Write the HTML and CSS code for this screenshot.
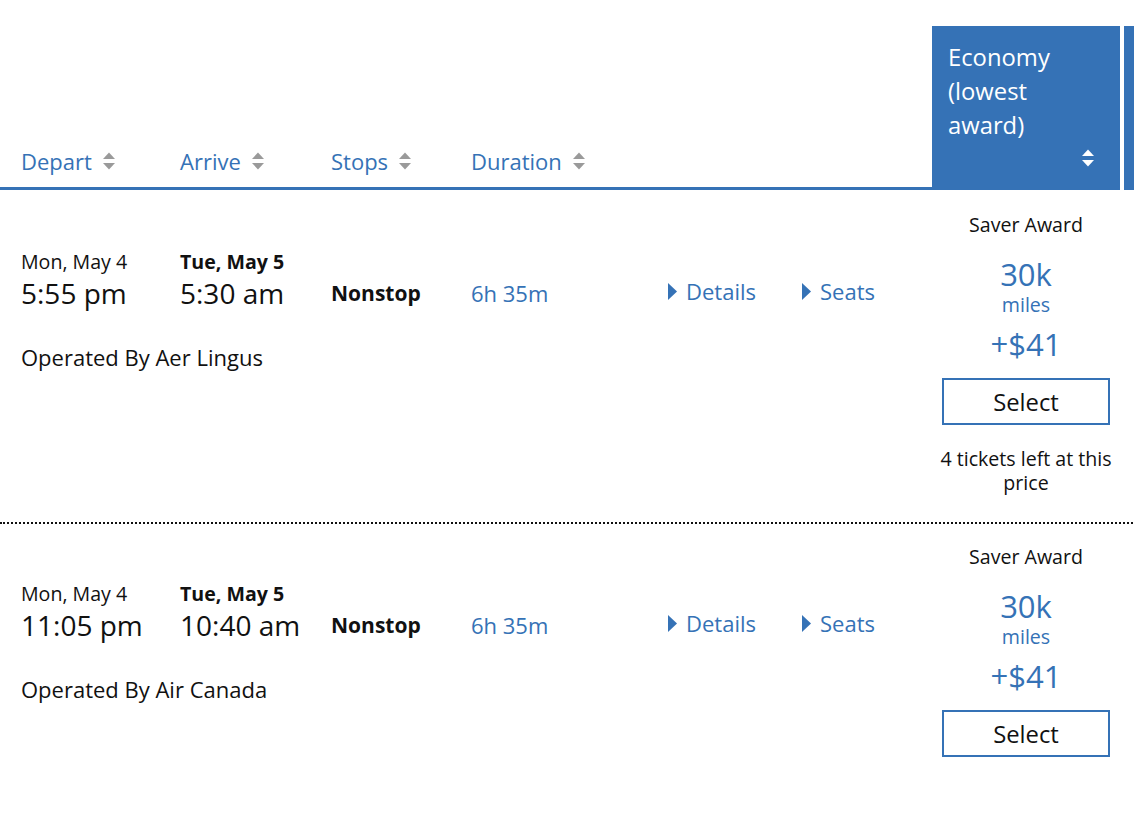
FILE: index.html
```html
<!DOCTYPE html>
<html lang="en">
<head>
<meta charset="utf-8">
<title>Flight results</title>
<link rel="stylesheet" href="styles.css">
</head>
<body>
<div class="results">
  <div class="thead">
    <div class="hcols">
      <div class="hcell"><span>Depart</span><svg class="sort" viewBox="0 0 12 18"><polygon points="0,7 6,0.5 12,7"/><polygon points="0,11 12,11 6,17.5"/></svg></div>
      <div class="hcell"><span>Arrive</span><svg class="sort" viewBox="0 0 12 18"><polygon points="0,7 6,0.5 12,7"/><polygon points="0,11 12,11 6,17.5"/></svg></div>
      <div class="hcell"><span>Stops</span><svg class="sort" viewBox="0 0 12 18"><polygon points="0,7 6,0.5 12,7"/><polygon points="0,11 12,11 6,17.5"/></svg></div>
      <div class="hcell"><span>Duration</span><svg class="sort" viewBox="0 0 12 18"><polygon points="0,7 6,0.5 12,7"/><polygon points="0,11 12,11 6,17.5"/></svg></div>
      <div class="hcell"></div>
      <div class="hcell"></div>
    </div>
    <div class="hecon">
      <div class="hecon-title">Economy<br>(lowest<br>award)</div>
      <svg class="sort sort-white" viewBox="0 0 12 18"><polygon points="0,7 6,0.5 12,7"/><polygon points="0,11 12,11 6,17.5"/></svg>
    </div>
    <div class="hnext"></div>
  </div>

  <div class="row">
    <div class="flight">
      <div class="fgrid">
        <div class="cell"><div class="date">Mon, May 4</div><div class="time">5:55 pm</div></div>
        <div class="cell"><div class="date bold">Tue, May 5</div><div class="time">5:30 am</div></div>
        <div class="cell stops">Nonstop</div>
        <div class="cell dur">6h 35m</div>
        <div class="cell link"><svg class="tri" viewBox="0 0 9 17"><polygon points="0,0 9,8.5 0,17"/></svg><span>Details</span></div>
        <div class="cell link"><svg class="tri" viewBox="0 0 9 17"><polygon points="0,0 9,8.5 0,17"/></svg><span>Seats</span></div>
      </div>
      <div class="operator">Operated By Aer Lingus</div>
    </div>
    <div class="fare">
      <div class="award">Saver Award</div>
      <div class="miles">30k</div>
      <div class="miles-label">miles</div>
      <div class="fee">+$41</div>
      <button class="select">Select</button>
      <div class="note">4 tickets left at this price</div>
    </div>
    <div class="next"></div>
  </div>

  <div class="row">
    <div class="flight">
      <div class="fgrid">
        <div class="cell"><div class="date">Mon, May 4</div><div class="time">11:05 pm</div></div>
        <div class="cell"><div class="date bold">Tue, May 5</div><div class="time">10:40 am</div></div>
        <div class="cell stops">Nonstop</div>
        <div class="cell dur">6h 35m</div>
        <div class="cell link"><svg class="tri" viewBox="0 0 9 17"><polygon points="0,0 9,8.5 0,17"/></svg><span>Details</span></div>
        <div class="cell link"><svg class="tri" viewBox="0 0 9 17"><polygon points="0,0 9,8.5 0,17"/></svg><span>Seats</span></div>
      </div>
      <div class="operator">Operated By Air Canada</div>
    </div>
    <div class="fare">
      <div class="award">Saver Award</div>
      <div class="miles">30k</div>
      <div class="miles-label">miles</div>
      <div class="fee">+$41</div>
      <button class="select">Select</button>
    </div>
    <div class="next"></div>
  </div>
</div>
</body>
</html>
```

FILE: styles.css
```css
* { box-sizing: border-box; }
html, body { margin: 0; padding: 0; }
body {
  font-family: "Open Sans", "Noto Sans", sans-serif;
  color: #111;
  background: #fff;
  width: 1134px;
  height: 836px;
  overflow: hidden;
}
.results { width: 1320px; }

/* header */
.thead { display: flex; align-items: flex-end; margin-bottom: 2px; }
.hcols {
  width: 932px;
  display: grid;
  grid-template-columns: 159px 151px 140px 197px 134px 130px;
  padding-left: 21px;
  padding-bottom: 11px;
  border-bottom: 3px solid #3572b6;
}
.hcell {
  display: flex;
  align-items: center;
  gap: 11px;
  font-size: 22px;
  line-height: 30px;
  color: #3572b6;
}
.sort { width: 12px; height: 18px; fill: #9a9a9a; display: block; }
.hecon {
  width: 188px;
  margin-top: 26px;
  background: #3572b6;
  color: #fff;
  padding: 14px 16px 23px;
  display: flex;
  flex-direction: column;
}
.hecon-title { font-size: 23.8px; line-height: 34px; }
.hecon .sort { fill: #fff; align-self: flex-end; margin-top: 7px; margin-right: 10px; }
.hnext {
  width: 188px;
  margin-left: 4px;
  align-self: stretch;
  margin-top: 26px;
  background: #3572b6;
}

/* rows */
.row { display: flex; border-bottom: 2px dotted #111; }
.row:last-child { border-bottom: none; }
.flight { width: 932px; padding-top: 58px; padding-left: 21px; }
.fgrid {
  display: grid;
  grid-template-columns: 159px 151px 140px 197px 134px 130px;
  align-items: end;
}
.date { font-size: 19.6px; line-height: 24px; }
.date.bold { font-weight: 700; }
.time { font-size: 28px; line-height: 34px; margin-top: 2px; }
.stops { font-size: 21px; font-weight: 700; line-height: 34px; }
.dur { font-size: 22px; line-height: 34px; color: #3572b6; }
.link {
  display: flex;
  align-items: center;
  gap: 9px;
  font-size: 22px;
  line-height: 30px;
  padding-bottom: 4px;
  color: #3572b6;
}
.tri { width: 9px; height: 17px; fill: #3572b6; display: block; }
.operator { font-size: 22px; line-height: 30px; margin-top: 32px; }

.fare {
  width: 188px;
  padding: 21px 0 27px;
  display: flex;
  flex-direction: column;
  align-items: center;
  text-align: center;
}
.award { font-size: 19.6px; line-height: 24px; }
.miles { font-size: 31px; line-height: 32px; color: #3572b6; margin-top: 21px; }
.miles-label { font-size: 19.6px; line-height: 20px; color: #3572b6; margin-top: 5px; }
.fee { font-size: 31px; line-height: 34px; color: #3572b6; margin-top: 12px; }
.select {
  width: 168px;
  height: 47px;
  margin-top: 17px;
  border: 2px solid #3572b6;
  background: #fff;
  color: #111;
  font-family: "Open Sans", "Noto Sans", sans-serif;
  font-size: 23.8px;
  padding: 0;
}
.note { font-size: 19.6px; line-height: 24px; margin-top: 22px; }
.next { width: 192px; }
```
